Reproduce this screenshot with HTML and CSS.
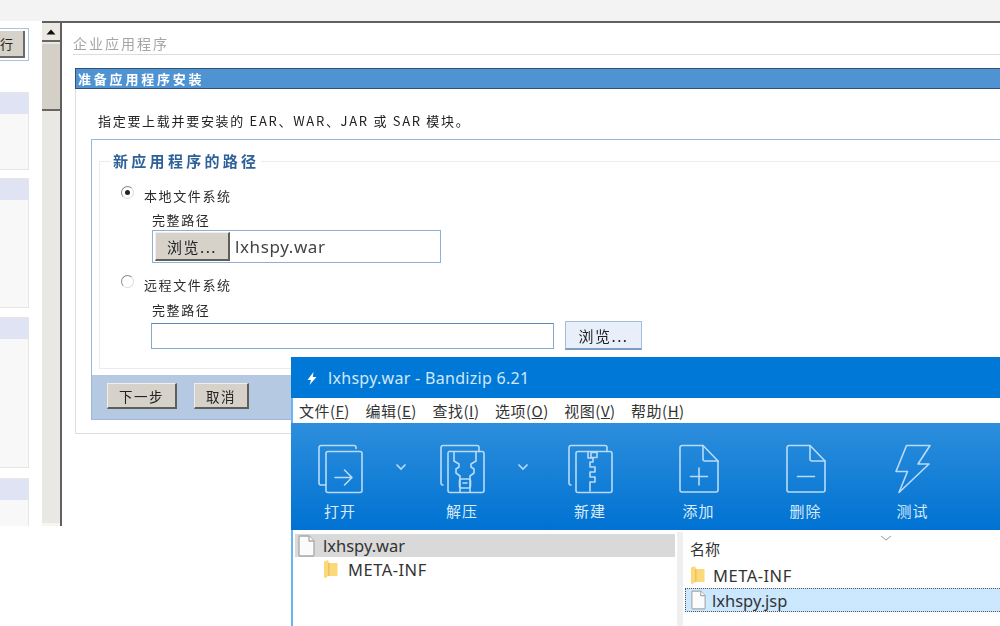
FILE: index.html
```html
<!DOCTYPE html>
<html lang="zh">
<head>
<meta charset="utf-8">
<title>lxhspy.war</title>
<link rel="stylesheet" href="styles.css">
</head>
<body>
<div class="desktop">
  <div class="topband"></div>
  <div class="console">
    <nav class="nav">
      <div class="nav-focus"><div class="nav-btn">行</div></div>
      <section class="nav-sec s1"><h4></h4><div></div></section>
      <section class="nav-sec s2"><h4></h4><div></div></section>
      <section class="nav-sec s3"><h4></h4><div></div></section>
      <section class="nav-sec s4"><h4></h4><div></div></section>
    </nav>
    <div class="scrollbar">
      <div class="sb-up"><svg width="10" height="6" viewBox="0 0 10 6"><path d="M5 0.5 9.5 5.5H0.5Z" fill="#111"/></svg></div>
      <div class="sb-thumb"></div>
      <div class="sb-track"></div>
      <div class="sb-down"></div>
    </div>
    <main class="content">
      <h1 class="page-title">企业应用程序</h1>
      <div class="panel">
        <h2 class="panel-head">准备应用程序安装</h2>
        <p class="intro">指定要上载并要安装的 EAR、WAR、JAR 或 SAR 模块。</p>
        <div class="formbox">
          <div class="fieldset">
            <div class="legend">新应用程序的路径</div>
            <div class="radio-row first"><span class="radio on"></span><span class="lbl">本地文件系统</span></div>
            <div class="path-lbl">完整路径</div>
            <div class="file-input"><span class="btn browse">浏览...</span><span class="file-name">lxhspy.war</span></div>
            <div class="radio-row second"><span class="radio"></span><span class="lbl">远程文件系统</span></div>
            <div class="path-lbl">完整路径</div>
            <div class="remote"><span class="text-input"></span><span class="btn-light">浏览...</span></div>
          </div>
          <div class="actions"><span class="btn next">下一步</span><span class="btn cancel">取消</span></div>
        </div>
      </div>
    </main>
  </div>

  <div class="bz">
    <div class="bz-title">
      <svg class="bz-logo" width="12" height="15" viewBox="0 0 12 14"><path d="M7.5 0.500 1.500 8.500h3.500L3.500 13.500 10.500 5.500H6.800Z" fill="#fff"/></svg>
      <span>lxhspy.war - Bandizip 6.21</span>
    </div>
    <div class="bz-menu">
      <span>文件(<u>F</u>)</span><span>编辑(<u>E</u>)</span><span>查找(<u>I</u>)</span><span>选项(<u>O</u>)</span><span>视图(<u>V</u>)</span><span>帮助(<u>H</u>)</span>
    </div>
    <div class="bz-tools">
      <div class="tool">
        <svg width="46" height="50" viewBox="0 0 46 50"><path d="M39 4.5V3.5a2 2 0 0 0-2-2H4a2 2 0 0 0-2 2V39a2 2 0 0 0 2 2h4.5"/><rect x="9" y="7.5" width="36" height="41" rx="2"/><path d="M18 33.5H34M27.5 26l7.5 7.5-7.5 7.5"/></svg>
        <span>打开</span>
      </div>
      <div class="chev"><svg width="12" height="8" viewBox="0 0 12 8"><path d="M1.5 1.5 6 6l4.500-4.500"/></svg></div>
      <div class="tool">
        <svg width="46" height="50" viewBox="0 0 46 50"><path d="M4 41a2 2 0 0 1-2-2V3.500a2 2 0 0 1 2-2H38a2 2 0 0 1 2 2V7.500"/><path d="M12 7.500H43a2 2 0 0 1 2 2V46.500a2 2 0 0 1-2 2H11a2 2 0 0 1-2-2V9.500a2 2 0 0 1 3-2Z"/><path d="M15 7.500V17l5 3v3l-3 2v4l4 3v16M37 7.500V17l-5 3v3l3 2v4l-4 3v16"/><rect x="20.500" y="35" width="11" height="9" rx="2"/><path d="M24 39h4"/></svg>
        <span>解压</span>
      </div>
      <div class="chev"><svg width="12" height="8" viewBox="0 0 12 8"><path d="M1.5 1.5 6 6l4.500-4.500"/></svg></div>
      <div class="tool wide">
        <svg width="46" height="50" viewBox="0 0 46 50"><path d="M4 41a2 2 0 0 1-2-2V3.500a2 2 0 0 1 2-2H38a2 2 0 0 1 2 2V7.500"/><rect x="9" y="7.500" width="36" height="41" rx="2"/><path d="M21 7.500V14h5v4h-3v5h5v5h-5v5h5v5h-5v9M24 8.500h6v5h-6z"/></svg>
        <span>新建</span>
      </div>
      <div class="tool">
        <svg width="42" height="50" viewBox="0 0 42 50"><path d="M25 1.500H4a2 2 0 0 0-2 2V46a2 2 0 0 0 2 2H38a2 2 0 0 0 2-2V17Z"/><path d="M25 1.500V15a2 2 0 0 0 2 2H40M21 24V41M12.500 32.500H29.500"/></svg>
        <span>添加</span>
      </div>
      <div class="tool">
        <svg width="42" height="50" viewBox="0 0 42 50"><path d="M25 1.500H4a2 2 0 0 0-2 2V46a2 2 0 0 0 2 2H38a2 2 0 0 0 2-2V17Z"/><path d="M25 1.500V15a2 2 0 0 0 2 2H40M12.500 32.500H29.500"/></svg>
        <span>删除</span>
      </div>
      <div class="tool">
        <svg width="38" height="50" viewBox="0 0 38 50"><path d="M12.500 1.500H36L24 20H35L5 48.500 13.500 27.500H2Z"/></svg>
        <span>测试</span>
      </div>
    </div>
    <div class="bz-body">
      <div class="tree">
        <div class="tree-row sel">
          <svg class="file" width="17" height="22" viewBox="0 0 17 22"><path d="M1 2a1 1 0 0 1 1-1H11L16 6V20a1 1 0 0 1-1 1H2a1 1 0 0 1-1-1Z"/><path d="M11 1V6H16"/></svg>
          <span>lxhspy.war</span>
        </div>
        <div class="tree-row child">
          <svg width="14" height="19" viewBox="0 0 14 19"><path d="M0 1.500 4 0 5 3H13.500V16H4L1 18.500 0 17Z" fill="#fbd878"/><path d="M4 3H5.500V16H4Z" fill="#f0c060"/></svg>
          <span class="folder-name">META-INF</span>
        </div>
      </div>
      <div class="split"></div>
      <div class="list">
        <div class="list-head"><span>名称</span><svg width="12" height="6" viewBox="0 0 12 6"><path d="M1 1 6 5l5-4" fill="none" stroke="#9a9a9a"/></svg></div>
        <div class="list-row">
          <svg width="14" height="19" viewBox="0 0 14 19"><path d="M0 1.500 4 0 5 3H13.500V16H4L1 18.500 0 17Z" fill="#fbd878"/><path d="M4 3H5.500V16H4Z" fill="#f0c060"/></svg>
          <span class="folder-name">META-INF</span>
        </div>
        <div class="list-row picked">
          <svg class="file" width="15" height="20" viewBox="0 0 17 22"><path d="M1 2a1 1 0 0 1 1-1H11L16 6V20a1 1 0 0 1-1 1H2a1 1 0 0 1-1-1Z"/><path d="M11 1V6H16"/></svg>
          <span>lxhspy.jsp</span>
        </div>
      </div>
    </div>
  </div>
</div>
</body>
</html>
```

FILE: styles.css
```css
* { box-sizing: border-box; }
html, body { margin: 0; height: 100%; background: #fff; overflow: hidden; }
body { font-family: "Noto Sans CJK SC", "Noto Sans", sans-serif; color: #222; }
.desktop { position: relative; width: 1000px; height: 626px; overflow: hidden; filter: blur(0.45px); }

.topband { height: 21px; background: #f3f3f3; }
.console { display: flex; height: 505px; }

/* left navigation */
.nav { width: 42px; padding-right: 13px; flex: none; background: #fff; overflow: hidden; }
.nav-focus { margin-top: 7px; height: 33px; border: 1px solid #a9c3e4; border-left: 0; padding: 2px 3px 2px 0; }
.nav-btn { height: 27px; background: #d6d2ca; border-right: 2px solid #6a6a66; border-bottom: 2px solid #6a6a66; text-align: right; padding-right: 15px; font-size: 13px; line-height: 25px; }
.nav-sec { border: 1px solid #e6e6e6; border-left: 0; background: #f8f8f8; }
.nav-sec h4 { margin: 0; height: 21px; background: #dfe3f3; }
.s1 { margin-top: 31px; height: 78px; }
.s2 { margin-top: 8px; height: 130px; }
.s3 { margin-top: 9px; height: 151px; }
.s4 { margin-top: 10px; height: 60px; border-bottom: 0; }

/* scrollbar */
.scrollbar { width: 20px; flex: none; border-right: 2px solid #606060; border-top: 2px solid #606060; display: flex; flex-direction: column; background: #e9e8e4; }
.sb-up { height: 19px; background: #ece9e2; border-bottom: 2px solid #666; display: flex; align-items: center; justify-content: center; }
.sb-thumb { margin-top: 2px; height: 67px; background: #d4d0c8; border-bottom: 2px solid #666; }
.sb-track { flex: 1; background: #e9e8e4; }
.sb-down { height: 3px; background: #f6f5f1; }

/* main content */
.content { flex: 1; min-width: 0; border-top: 2px solid #606060; padding: 11px 0 0 11px; }
.page-title { margin: 0; height: 21px; border-bottom: 1px solid #dcdcdc; font-size: 14px; font-weight: 400; line-height: 18px; letter-spacing: 2px; color: #a6a6a6; }
.panel { margin: 13px 0 0 2px; height: 366px; border: 1px solid #dedede; border-right: 0; }
.panel-head { margin: -1px 0 0 -1px; height: 21px; background: #4f93d3; border: 1px solid #33506f; border-right: 0; color: #fff; font-size: 13px; font-weight: 700; line-height: 19px; letter-spacing: 2.8px; padding-left: 2px; }
.intro { margin: 23px 0 0 22px; height: 17px; font-size: 13px; line-height: 17px; letter-spacing: 1.7px; color: #222; white-space: nowrap; }
.formbox { margin: 10px 0 0 15px; height: 281px; border: 1px solid #9ab7dc; border-right: 0; overflow: hidden; }
.fieldset { height: 208px; margin: 21px 0 0 7px; border: 1px solid #ececec; border-right: 0; padding-left: 52px; }
.legend { width: fit-content; margin: -12px 0 0 -41px; padding: 0 2px; background: #fff; color: #2f6199; font-size: 15px; font-weight: 700; line-height: 21px; letter-spacing: 3.3px; }
.radio-row { display: flex; align-items: center; height: 18px; margin-left: -31px; }
.radio-row.first { margin-top: 15px; }
.radio-row.second { margin-top: 12px; }
.second + .path-lbl { margin-top: 8px; }
.radio { width: 13px; height: 13px; flex: none; border-radius: 50%; border: 1.5px solid #8a8a8a; border-right-color: #ddd; border-bottom-color: #ddd; background: #fff; margin: -6px 12px 0 0; display: flex; align-items: center; justify-content: center; }
.radio.on::before { content: ""; width: 5px; height: 5px; border-radius: 50%; background: #222; }
.lbl, .path-lbl { font-size: 13px; letter-spacing: 1.6px; line-height: 18px; color: #2a2a2a; }
.lbl { margin-left: -2px; margin-top: 2px; }
.path-lbl { margin-top: 7px; height: 18px; }
.file-input { display: flex; align-items: center; width: 289px; height: 33px; margin-top: 1px; border: 1px solid #8fb0d6; padding-left: 2px; background: #fff; }
.btn { display: flex; align-items: center; justify-content: center; background: #d6d2ca; border-right: 2px solid #5e5e5a; border-bottom: 2px solid #5e5e5a; border-top: 1px solid #f0eee8; border-left: 1px solid #f0eee8; color: #222; letter-spacing: 1.5px; }
.browse { width: 75px; height: 29px; font-size: 15px; }
.file-name { margin-left: 5px; font-family: "Noto Sans", sans-serif; font-size: 17px; letter-spacing: 0.6px; color: #444; }
.remote { display: flex; align-items: flex-end; gap: 11px; height: 28px; margin: 2px 0 0 -1px; }
.text-input { width: 403px; height: 26px; border: 1px solid #86a9d2; border-top-color: #5f88b8; background: #fff; }
.btn-light { width: 77px; height: 29px; margin-bottom: -1px; background: #e8effa; border: 1px solid #a5bddb; border-bottom: 2px solid #7c9cc4; display: flex; align-items: center; justify-content: center; font-size: 15px; letter-spacing: 1.5px; color: #222; }
.actions { height: 44px; margin-top: 6px; background: #b5c9e2; display: flex; gap: 17px; padding: 8px 0 0 15px; }
.next, .cancel { height: 26px; font-size: 13.500px; }
.next { width: 70px; }
.cancel { width: 55px; }

/* Bandizip window */
.bz { position: absolute; left: 291px; top: 357px; right: 0; bottom: 0; background: #fff; border-left: 2px solid #6db3f0; display: flex; flex-direction: column; }
.bz-title { height: 41px; flex: none; background: #0078d7; margin-left: -2px; display: flex; align-items: center; padding-left: 15px; gap: 10px; color: #d2e8fa; font-family: "Noto Sans", sans-serif; font-size: 16px; letter-spacing: 0.3px; }
.bz-logo { margin-top: 1px; }
.bz-menu { height: 25px; flex: none; background: #fff; display: flex; gap: 15.500px; padding-left: 6px; font-size: 15px; line-height: 25px; color: #333; white-space: nowrap; }
.bz-menu span { letter-spacing: 0.5px; }
.bz-tools { height: 107px; flex: none; margin-left: -2px; background: linear-gradient(#2d8edc, #0072d2); display: grid; grid-template-columns: 98px 24px 98px 24px 110px 107px 107px 107px; }
.tool { display: flex; flex-direction: column; align-items: center; padding-top: 21px; height: 100%; color: #d8ebfb; font-size: 15px; }
.tool svg { height: 50px; fill: none; stroke: #b9dbf7; stroke-width: 1.6; stroke-linejoin: round; stroke-linecap: round; }
.tool span { margin-top: 5px; line-height: 24px; letter-spacing: 1px; }
.chev { display: flex; justify-content: center; padding-top: 40px; }
.chev svg { fill: none; stroke: #b9dbf7; stroke-width: 1.6; }

.bz-body { flex: 1; display: flex; min-height: 0; padding-top: 2px; font-family: "Noto Sans", sans-serif; font-size: 16.500px; color: #333; }
.tree { width: 384px; flex: none; padding: 2px 2px 0 2px; }
.tree-row { display: flex; align-items: center; height: 23px; }
.tree-row.sel { background: #d9d9d9; padding-left: 3px; gap: 8px; }
.tree-row.child { padding-left: 29px; gap: 10px; margin-top: 1px; }
.folder-name { letter-spacing: 0.5px; }
.split { width: 6px; flex: none; background: #efefef; }
.list { flex: 1; min-width: 0; padding-top: 2px; }
.list-head { display: flex; height: 29px; padding: 0 0 1px 7px; align-items: center; gap: 160px; font-family: "Noto Sans CJK SC", sans-serif; font-size: 15px; }
.list-head svg { margin-top: -21px; }
.list-row { display: flex; align-items: center; height: 24px; padding-left: 8px; gap: 8px; }
.list-row.picked { margin: 1px 0 0 2px; padding-left: 5px; gap: 6px; background: #cce8ff; border: 1px dotted #555; border-right: 0; }
.file { fill: #fbfbfb; stroke: #a8a8a8; stroke-width: 1.300; stroke-linejoin: round; flex: none; }
```
